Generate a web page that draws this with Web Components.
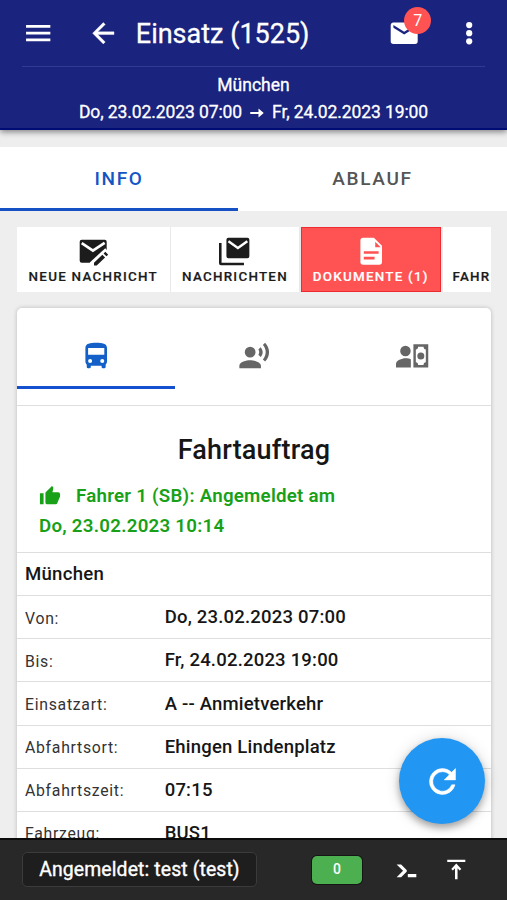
<!DOCTYPE html>
<html lang="de">
<head>
<meta charset="utf-8">
<title>Einsatz (1525)</title>
<style>
html,body{margin:0;height:100%;overflow:hidden}
body{font-family:Roboto,"Liberation Sans",sans-serif;background:#eee;color:#161616}
</style>
</head>
<body>
<trip-app></trip-app>
<script>
const icons = {
  menu: '<path d="M3 6h18v2H3V6m0 5h18v2H3v-2m0 5h18v2H3v-2z"/>',
  back: '<path d="M20 11v2H8l5.5 5.5-1.42 1.42L4.16 12l7.92-7.92L13.5 5.5 8 11h12z" stroke="currentColor" stroke-width=".3"/>',
  mail: '<path d="M20 8l-8 5-8-5V6l8 5 8-5m0-2H4c-1.110 0-2 .89-2 2v12a2 2 0 0 0 2 2h16a2 2 0 0 0 2-2V6c0-1.110-.9-2-2-2z"/>',
  dots: '<circle cx="12" cy="6" r="2.300"/><circle cx="12" cy="12" r="2.300"/><circle cx="12" cy="18" r="2.300"/>',
  right: '<path d="M3 10.600v2.800h11V18l7-6-7-6v4.600z"/>',
  mailEdit: '<path d="M3.500 3.500h17A1.500 1.500 0 0 1 22 5v6.300L10.500 20.500h-7A1.500 1.500 0 0 1 2 19V5a1.500 1.500 0 0 1 1.500-1.500z"/><path d="M3.500 6l8.300 5.600L20.500 5.800" fill="none" stroke="#fff" stroke-width="2"/><path d="M11 22L22.500 11.500" stroke="#fff" stroke-width="4.600"/><path d="M12.600 20.500l6.200-5.900 2 2.100-6.200 5.900h-2zM19.700 13.700l1.300-1.200 2.100 2.200-1.300 1.100z"/>',
  mailMulti: '<path d="M7 2h14a1.500 1.500 0 0 1 1.500 1.500v12.300A1.500 1.500 0 0 1 21 17.300H7a1.500 1.500 0 0 1-1.500-1.500V3.500A1.500 1.500 0 0 1 7 2zM0 6h1.900v14.600h16.600v1.900H1.500A1.500 1.500 0 0 1 0 21z"/><path d="M7 4.600l7 5 7-5" fill="none" stroke="#fff" stroke-width="1.800"/>',
  doc: '<path fill-rule="evenodd" d="M6 2a2 2 0 0 0-2 2v16a2 2 0 0 0 2 2h12a2 2 0 0 0 2-2V8l-6-6H6zm9 3v4h4L15 5zM6.500 12h11v1.900h-11V12zm0 4.200h8v1.900h-8v-1.900z"/>',
  bus: '<path d="M18 11H6V6h12m-1.500 11a1.500 1.500 0 1 1 0-3 1.500 1.500 0 0 1 0 3m-9 0a1.500 1.500 0 1 1 0-3 1.500 1.500 0 0 1 0 3M4 16c0 .88.39 1.670 1 2.220V20a1 1 0 0 0 1 1h1a1 1 0 0 0 1-1v-1h8v1a1 1 0 0 0 1 1h1a1 1 0 0 0 1-1v-1.780c.61-.55 1-1.340 1-2.220V6c0-3.500-3.580-4-8-4s-8 .5-8 4v10z"/>',
  voice: '<path d="M9 5a4 4 0 1 1 0 8 4 4 0 0 1 0-8m0 10c2.670 0 8 1.340 8 4v2H1v-2c0-2.660 5.330-4 8-4m7.760-9.640c2.020 2.200 2.020 5.250 0 7.270l-1.680-1.690c.84-1.180.84-2.710 0-3.890l1.680-1.690M20.070 2c3.930 4.050 3.900 10.110 0 14l-1.630-1.630c2.770-3.180 2.770-7.720 0-10.740L20.070 2z"/>',
  cash: '<path fill-rule="evenodd" d="M7 4.300a3.900 3.900 0 1 1 0 7.800 3.900 3.900 0 0 1 0-7.800M7 13.500c1.700 0 3 .25 4 .8v6H0v-2.500c0-2.700 4.400-4.300 7-4.300zM12.900 3.200h11v17.100h-11V3.200zm3.500 1.800c0 1.200-.7 2-1.700 2v9.500c1 0 1.700.8 1.700 2h4c0-1.200.7-2 1.700-2V7c-1 0-1.700-.8-1.700-2h-4zm2 4.200a2.600 2.600 0 1 1 0 5.200 2.600 2.600 0 0 1 0-5.200z"/>',
  thumb: '<path d="M23 10a2 2 0 0 0-2-2h-6.320l.96-4.570c.02-.1.030-.21.030-.32 0-.41-.17-.79-.44-1.060L14.170 1 7.590 7.580C7.220 7.950 7 8.450 7 9v10a2 2 0 0 0 2 2h9c.83 0 1.540-.5 1.840-1.220l3.020-7.050c.09-.23.14-.47.14-.73v-2M1 21h4V9H1v12z"/>',
  refresh: '<path d="M17.650 6.350A7.960 7.960 0 0 0 12 4a8 8 0 1 0 7.730 10h-2.080A6 6 0 1 1 12 6c1.660 0 3.140.69 4.220 1.780L13 11h7V4l-2.350 2.350z" stroke="currentColor" stroke-width=".3"/>',
  shell: '<path d="M13 19v-3h8v3h-8m-4.500-6L2.470 7h4.240l4.960 4.960c.58.59.58 1.550 0 2.130L6.740 19H2.500l6-6z"/>',
  top: '<path d="M4 2.500h17v2.300H4zM12.500 6.200l4.700 5-1.500 1.500-2-2V21h-2.400V10.700l-2 2-1.500-1.500z"/>'
};

function define(name, markup, ready) {
  const template = document.createElement('template');
  template.innerHTML = markup;
  customElements.define(name, class extends HTMLElement {
    constructor() {
      super();
      this.attachShadow({mode: 'open'}).append(template.content.cloneNode(true));
    }
    connectedCallback() { if (ready) ready(this, this.shadowRoot); }
  });
}

define('ui-icon', `<style>:host{display:block;flex:none;width:32.400px;height:32.400px}svg{display:block;width:100%;height:100%;fill:currentColor;overflow:visible}</style><svg viewBox="0 0 24 24"></svg>`,
  (el, root) => { root.querySelector('svg').innerHTML = icons[el.getAttribute('name')]; });

define('app-header', `<style>
:host{display:block;box-sizing:border-box;height:130px;background:#1a237e;color:#fff;border-bottom:2px solid #000c76;box-shadow:0 2px 6px rgba(0,0,0,.45);padding:0 22px;position:relative}
.bar{height:66px;display:flex;align-items:center;border-bottom:1px solid #303b91}
h1{font-size:27px;font-weight:400;margin:1px auto 0 16px;-webkit-text-stroke:.3px}
.mail{position:relative;margin-right:32px}
.badge{position:absolute;left:16px;top:-10px;width:27px;height:27px;border-radius:50%;background:#ff5252;font-size:16px;line-height:27px;text-align:center}
.sub{text-align:center;font-size:17.500px;line-height:27px;padding-top:5px;-webkit-text-stroke:.3px}
.when{display:flex;justify-content:center;align-items:center;gap:6px;letter-spacing:-.1px}
.when ui-icon{width:18px;height:18px}
</style>
<div class="bar"><ui-icon name="menu"></ui-icon><ui-icon name="back" style="margin-left:33px"></ui-icon><h1>Einsatz (1525)</h1><div class="mail"><ui-icon name="mail"></ui-icon><div class="badge">7</div></div><ui-icon name="dots"></ui-icon></div>
<div class="sub">München<div class="when"><span>Do, 23.02.2023 07:00</span><ui-icon name="right"></ui-icon><span>Fr, 24.02.2023 19:00</span></div></div>`);

define('main-tabs', `<style>
:host{display:grid;grid-template-columns:238px 1fr;background:#fff;height:64px;margin-top:17px}
div{box-sizing:border-box;display:flex;align-items:center;justify-content:center;font-size:19px;font-weight:500;letter-spacing:1.700px;color:#555;padding-top:2px;border-bottom:3px solid transparent}
.on{color:#1455c4;border-color:#1550c4}
</style><div class="on">INFO</div><div>ABLAUF</div>`);

define('action-button', `<style>
:host{display:flex;flex:none;box-sizing:border-box;height:65px;flex-direction:column;align-items:center;background:#fff;padding-top:8px;color:#1c1c1c;font-size:13.400px;font-weight:500;letter-spacing:1.250px;line-height:19px;white-space:nowrap;-webkit-text-stroke:.2px}
:host([alert]){background:#ff5252;color:#fff;box-shadow:inset 0 0 0 1px #ee2b30}
</style><ui-icon></ui-icon><span><slot></slot></span>`,
  (el, root) => {
    const name = el.getAttribute('icon');
    const icon = document.createElement(name ? 'ui-icon' : 'div');
    if (name) icon.setAttribute('name', name);
    else icon.style.height = '32.4px';
    root.querySelector('ui-icon').replaceWith(icon);
  });

define('action-bar', `<style>:host{display:flex;overflow:hidden;margin:16px 17px 0;width:473.500px;height:65px;gap:1.500px;background:#e9e9e9}</style>
<action-button icon="mailEdit" style="width:152.500px">NEUE NACHRICHT</action-button>
<action-button icon="mailMulti" style="width:128px">NACHRICHTEN</action-button>
<action-button icon="doc" alert style="width:140.500px">DOKUMENTE (1)</action-button>
<action-button style="width:48px;align-items:flex-start;padding-left:10px;box-sizing:border-box">FAHR</action-button>`);

define('info-row', `<style>
:host{display:grid;grid-template-columns:139.700px 1fr;align-items:center;box-sizing:border-box;height:43.150px;padding:0 8px;border-top:1.500px solid #dedede;white-space:nowrap}
.k{font-size:15.800px;letter-spacing:.72px;color:#333;padding-top:2px}
.v{font-size:18.500px;font-weight:500;letter-spacing:.2px}
</style><span class="k"></span><span class="v"><slot></slot></span>`,
  (el, root) => { root.querySelector('.k').textContent = el.getAttribute('label'); });

define('trip-card', `<style>
:host{display:block;box-sizing:border-box;margin:16px 16px 0 17px;height:570px;background:#fff;border-radius:5px;box-shadow:0 0 4px rgba(0,0,0,.22);overflow:hidden}
.tabs{display:grid;grid-template-columns:repeat(3,158px);height:97px;color:#666}
.tab{box-sizing:border-box;height:81px;display:flex;justify-content:center;align-items:center;padding-top:19px;border-bottom:3px solid transparent}
.on{color:#1260c8;border-color:#1550cf}
.head{box-sizing:border-box;height:147px;border-top:1.500px solid #dedede;padding:27px 22px 0}
h2{margin:0;text-align:center;font-size:27px;font-weight:500;line-height:34px;letter-spacing:.2px}
.ok{margin-top:15px;color:#18a018;font-size:18.700px;line-height:29.600px;font-weight:600;letter-spacing:.26px}
.ok ui-icon{display:inline-block;width:22px;height:22px;vertical-align:-5px;margin-right:15px}
.town{box-sizing:border-box;height:43.200px;border-top:1.500px solid #dedede;padding-left:8px;font-size:18.600px;font-weight:500;letter-spacing:.25px;line-height:42px}
</style>
<div class="tabs"><div class="tab on"><ui-icon name="bus"></ui-icon></div><div class="tab"><ui-icon name="voice"></ui-icon></div><div class="tab"><ui-icon name="cash"></ui-icon></div></div>
<div class="head"><h2>Fahrtauftrag</h2><div class="ok"><ui-icon name="thumb"></ui-icon>Fahrer 1 (SB): Angemeldet am<br>Do, 23.02.2023 10:14</div></div>
<div class="town">München</div>
<info-row label="Von:">Do, 23.02.2023 07:00</info-row>
<info-row label="Bis:">Fr, 24.02.2023 19:00</info-row>
<info-row label="Einsatzart:">A -- Anmietverkehr</info-row>
<info-row label="Abfahrtsort:">Ehingen Lindenplatz</info-row>
<info-row label="Abfahrtszeit:">07:15</info-row>
<info-row label="Fahrzeug:">BUS1</info-row>`);

define('refresh-button', `<style>
:host{position:absolute;left:399px;top:738px;width:86px;height:86px;border-radius:50%;background:#2196f3;color:#fff;display:flex;align-items:center;justify-content:center;box-shadow:0 4px 7px rgba(0,0,0,.3),0 1px 16px rgba(0,0,0,.14)}
ui-icon{width:39px;height:39px}
</style><ui-icon name="refresh"></ui-icon>`);

define('status-bar', `<style>
:host{position:absolute;left:0;right:0;bottom:0;height:62px;box-sizing:border-box;background:#282828;border-top:2px solid #0c0c0c;color:#fff;display:flex;align-items:center;padding:0 0 1px 22px}
.user{box-sizing:border-box;width:235px;height:35px;border:1px solid #3b3b3b;border-radius:5px;background:#1e1e1e;font-size:19.400px;line-height:33px;letter-spacing:.12px;text-align:center;white-space:nowrap;-webkit-text-stroke:.35px}
.count{box-sizing:border-box;margin-left:55px;width:50px;height:28px;border-radius:5px;background:#4caf50;box-shadow:0 0 0 1px #151515;font-size:14px;font-weight:500;line-height:27px;text-align:center}
ui-icon{width:25.500px;height:25.500px}
</style><div class="user">Angemeldet: test (test)</div><div class="count">0</div><ui-icon name="shell" style="margin-left:32px"></ui-icon><ui-icon name="top" style="margin-left:23px"></ui-icon>`);

define('trip-app', `<style>:host{display:block;position:relative;height:900px;width:507px;overflow:hidden;background:#eee}</style>
<app-header></app-header><main-tabs></main-tabs><action-bar></action-bar><trip-card></trip-card><refresh-button></refresh-button><status-bar></status-bar>`);
</script>
</body>
</html>
